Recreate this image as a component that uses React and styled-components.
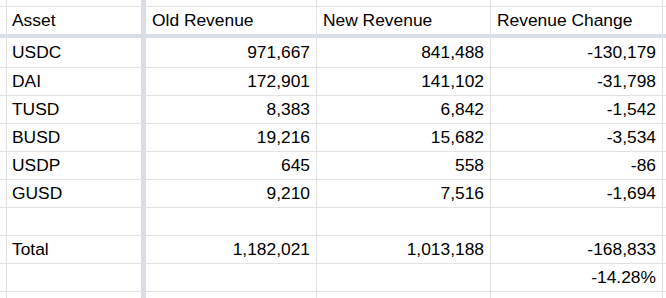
import React from "react";
import styled, { createGlobalStyle } from "styled-components";

const GlobalStyle = createGlobalStyle`
  html, body {
    margin: 0;
    padding: 0;
    background: #ffffff;
    overflow: hidden;
  }
  body {
    font-family: "Liberation Sans", Arial, sans-serif;
  }
`;

const Sheet = styled.div`
  width: 666px;
  height: 298px;
  overflow: hidden;
  background: #ffffff;
`;

const Row = styled.div`
  display: grid;
  grid-template-columns: 6px 140px 171px 174px 172px 1fr;
  height: ${(p) => p.$height}px;
`;

const Cell = styled.div`
  box-sizing: border-box;
  display: flex;
  align-items: center;
  justify-content: ${(p) => (p.$num ? "flex-end" : "flex-start")};
  padding: 0 ${(p) => (p.$num ? "6px" : "0")} 0 ${(p) => (p.$num ? "0" : "6px")};
  border-right: ${(p) => (p.$frozen ? "5px solid #d9dde5" : "1px solid #e2e2e3")};
  border-bottom: ${(p) => (p.$header ? "4px solid #d9dde5" : "1px solid #e2e2e3")};
  font-size: 17.4px;
  color: #000000;
  white-space: nowrap;
  overflow: hidden;
`;

const rows = [
  { height: 30, cells: ["USDC", "971,667", "841,488", "-130,179"] },
  { height: 28, cells: ["DAI", "172,901", "141,102", "-31,798"] },
  { height: 28, cells: ["TUSD", "8,383", "6,842", "-1,542"] },
  { height: 28, cells: ["BUSD", "19,216", "15,682", "-3,534"] },
  { height: 28, cells: ["USDP", "645", "558", "-86"] },
  { height: 28, cells: ["GUSD", "9,210", "7,516", "-1,694"] },
  { height: 28, cells: ["", "", "", ""] },
  { height: 28, cells: ["Total", "1,182,021", "1,013,188", "-168,833"] },
  { height: 28, cells: ["", "", "", "-14.28%"] },
  { height: 28, cells: ["", "", "", ""] },
];

function SheetRow({ height, cells, header }) {
  return (
    <Row $height={height}>
      <Cell $header={header} />
      <Cell $header={header} $frozen>
        {cells[0]}
      </Cell>
      <Cell $header={header} $num={!header}>
        {cells[1]}
      </Cell>
      <Cell $header={header} $num={!header}>
        {cells[2]}
      </Cell>
      <Cell $header={header} $num={!header}>
        {cells[3]}
      </Cell>
      <Cell $header={header} />
    </Row>
  );
}

export default function App() {
  return (
    <>
      <GlobalStyle />
      <Sheet>
        <SheetRow height={7} cells={["", "", "", ""]} />
        <SheetRow
          height={31}
          header
          cells={["Asset", "Old Revenue", "New Revenue", "Revenue Change"]}
        />
        {rows.map((r, i) => (
          <SheetRow key={i} height={r.height} cells={r.cells} />
        ))}
      </Sheet>
    </>
  );
}
